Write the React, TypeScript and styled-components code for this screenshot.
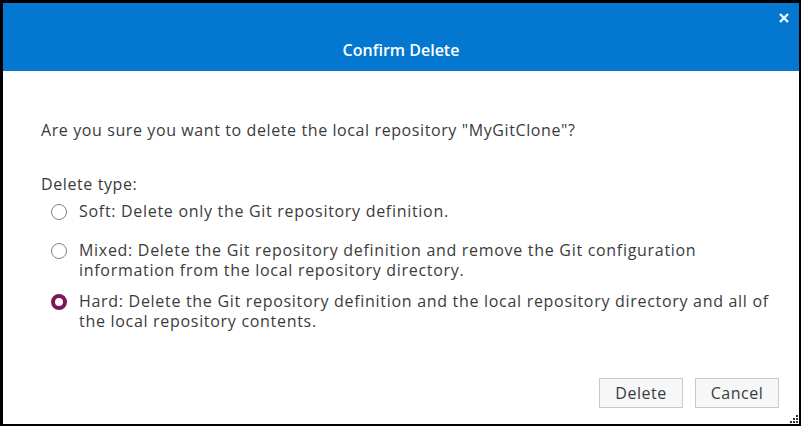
import React, { useState } from "react";
import styled, { createGlobalStyle } from "styled-components";

const Global = createGlobalStyle`
  html, body { margin: 0; padding: 0; background: #000; }
  body { width: 801px; height: 426px; overflow: hidden; }
  * { box-sizing: border-box; }
`;

const Dialog = styled.div`
  position: relative;
  margin: 3px 2px 0 3px;
  width: 796px;
  height: 421px;
  background: #fff;
  display: flex;
  flex-direction: column;
  font-family: "Open Sans", "Noto Sans", sans-serif;
  color: #3b3b3b;
`;

const Header = styled.div`
  position: relative;
  height: 68px;
  background: #0478d0;
  display: flex;
  align-items: flex-end;
  justify-content: center;
  padding-bottom: 10px;
`;

const Title = styled.h1`
  margin: 0;
  font-family: "Open Sans", sans-serif;
  font-size: 16px;
  font-weight: 600;
  color: #fff;
`;

const CloseButton = styled.button`
  position: absolute;
  top: 5px;
  right: 5px;
  width: 20px;
  height: 20px;
  padding: 0;
  border: none;
  background: transparent;
  display: flex;
  align-items: center;
  justify-content: center;
  cursor: pointer;
`;

const Body = styled.div`
  flex: 1;
  padding: 49px 10px 0 38px;
  display: flex;
  flex-direction: column;
  font-size: 16px;
  letter-spacing: 0.6px;
`;

const Question = styled.p`
  margin: 0 0 34px 0;
  line-height: 20px;
`;

const GroupLabel = styled.div`
  line-height: 20px;
  margin-bottom: 8px;
`;

const OptionList = styled.div`
  display: flex;
  flex-direction: column;
  gap: 12px;
`;

const Option = styled.label`
  display: flex;
  align-items: flex-start;
  gap: 12px;
  min-height: 27px;
  line-height: 19.5px;
  cursor: pointer;
  padding-left: 10px;
`;

const Radio = styled.span<{ $checked: boolean }>`
  flex: none;
  margin-top: 2px;
  width: 16px;
  height: 16px;
  border-radius: 50%;
  border: ${(p) => (p.$checked ? "4.5px solid #7d1559" : "1px solid #7a8290")};
  background: #fff;
`;

const OptionText = styled.span`
  max-width: 705px;
  letter-spacing: 0.7px;
`;

const Footer = styled.div`
  display: flex;
  justify-content: flex-end;
  gap: 12px;
  padding: 0 20px 16px 0;
`;

const Button = styled.button`
  width: 84px;
  height: 30px;
  border: 1px solid #c6cad0;
  background: #f6f7f9;
  color: #3b3b3b;
  font-family: "Open Sans", "Noto Sans", sans-serif;
  font-size: 16px;
  letter-spacing: 0.5px;
  padding: 0;
  cursor: pointer;
`;

const Grip = styled.svg`
  position: absolute;
  right: 1px;
  bottom: 1px;
`;

const options = [
  { id: "soft", text: "Soft: Delete only the Git repository definition." },
  {
    id: "mixed",
    text: "Mixed: Delete the Git repository definition and remove the Git configuration information from the local repository directory.",
  },
  {
    id: "hard",
    text: "Hard: Delete the Git repository definition and the local repository directory and all of the local repository contents.",
  },
];

export default function App() {
  const [sel, setSel] = useState("hard");
  return (
    <>
      <Global />
      <Dialog>
        <Header>
          <Title>Confirm Delete</Title>
          <CloseButton aria-label="Close">
            <svg width="10" height="10" viewBox="0 0 10 10">
              <path d="M1 1L9 9M9 1L1 9" stroke="#fff" strokeWidth="2.2" />
            </svg>
          </CloseButton>
        </Header>
        <Body>
          <Question>Are you sure you want to delete the local repository "MyGitClone"?</Question>
          <GroupLabel>Delete type:</GroupLabel>
          <OptionList>
            {options.map((o) => (
              <Option key={o.id} onClick={() => setSel(o.id)}>
                <Radio $checked={sel === o.id} />
                <OptionText>{o.text}</OptionText>
              </Option>
            ))}
          </OptionList>
        </Body>
        <Footer>
          <Button>Delete</Button>
          <Button>Cancel</Button>
        </Footer>
        <Grip width="8" height="8" viewBox="0 0 8 8">
          <rect x="6" y="0" width="2" height="2" fill="#333" />
          <rect x="3" y="3" width="2" height="2" fill="#333" />
          <rect x="6" y="3" width="2" height="2" fill="#333" />
          <rect x="0" y="6" width="2" height="2" fill="#333" />
          <rect x="3" y="6" width="2" height="2" fill="#333" />
          <rect x="6" y="6" width="2" height="2" fill="#333" />
        </Grip>
      </Dialog>
    </>
  );
}
